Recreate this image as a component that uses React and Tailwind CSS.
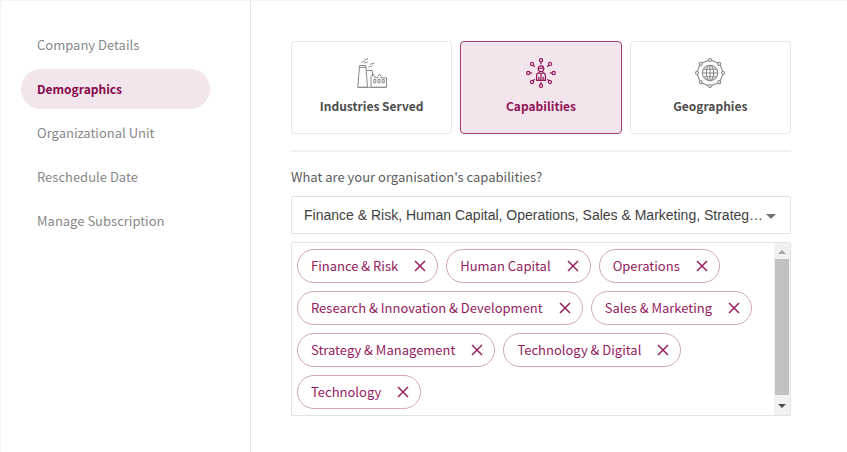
import { useState } from "react";

const navItems = [
  "Company Details",
  "Demographics",
  "Organizational Unit",
  "Reschedule Date",
  "Manage Subscription",
];

const selection =
  "Finance & Risk, Human Capital, Operations, Sales & Marketing, Strategy & Management, Technology & Digital";

const initialChips = [
  "Finance & Risk",
  "Human Capital",
  "Operations",
  "Research & Innovation & Development",
  "Sales & Marketing",
  "Strategy & Management",
  "Technology & Digital",
  "Technology",
];

const angles = [0, 45, 90, 135, 180, 225, 270, 315];

function FactoryIcon() {
  return (
    <svg viewBox="0 0 30 30" className="size-[30px]" fill="none" stroke="currentColor" strokeWidth="1" aria-hidden="true">
      <path d="M0.8 29.3 2.6 7.5h6.2l1.7 21.8zM2.4 9.3h6.7" />
      <path d="M9.3 12.5h5.9l.6 6" />
      <path d="M14 29.3V18.5l2.2-2.5 1.6 2.5v1.3h3v-1.3l1.8-2.5 1.6 2.5v1.3h5.3v9.5z" />
      <path d="M0.8 29.3h28.7" />
      <path d="M16.8 21.5h2v3.4h-2zM21 21.5h2v3.4h-2zM25.2 21.5h2v3.4h-2z" />
      <path d="M4.2 4.6c1.6-2.2 2.6.5 4.2-1.9M7.3 2.3C8.5.2 9.5 2.2 11 .5M7.3 5.3c1.4-1.8 2.4.4 4-1.8M11.3 9.4c1.6-2.2 2.6.4 4.2-1.9M13 6.6c1.4-1.8 2.6.2 4.6-1.8" />
    </svg>
  );
}

function CapabilitiesIcon() {
  return (
    <svg viewBox="0 0 30 30" className="size-[30px]" fill="none" stroke="currentColor" strokeWidth="1.2" aria-hidden="true">
      {angles.map((a) => (
        <g key={a} transform={`rotate(${a} 15 15)`}>
          <circle cx="15" cy="2.3" r="1.6" />
          <path d="M15 3.9v2.4" />
        </g>
      ))}
      <circle cx="15" cy="10.7" r="2.8" />
      <path d="M12.2 10c2 .5 4.2.3 5.6-.2" />
      <path d="M10.6 22.3v-4.8c0-1.6 1.2-2.5 2.8-2.9l1.6 1.6 1.6-1.6c1.6.4 2.8 1.3 2.8 2.9v4.8zM15 16.2v6M12.9 18.8v3.4M17.1 18.8v3.4" />
    </svg>
  );
}

function GlobeIcon() {
  return (
    <svg viewBox="0 0 30 30" className="size-[30px]" fill="none" stroke="currentColor" strokeWidth="1.1" aria-hidden="true">
      {angles.map((a) => (
        <g key={a} transform={`rotate(${a} 15 15)`}>
          <circle cx="15" cy="2" r="1.5" />
          <path d="M16.6 2.3 23 4.9" />
        </g>
      ))}
      <circle cx="15" cy="15" r="7.7" />
      <ellipse cx="15" cy="15" rx="3.7" ry="7.7" />
      <path d="M15 7.3v15.4M7.3 15h15.4M8.6 11.2h12.8M8.6 18.8h12.8" />
    </svg>
  );
}

const cards = [
  { label: "Industries Served", Icon: FactoryIcon },
  { label: "Capabilities", Icon: CapabilitiesIcon },
  { label: "Geographies", Icon: GlobeIcon },
];

function Chip({ label, onRemove }) {
  return (
    <li className="flex h-[34px] items-center rounded-full border border-[#d5a3bd] pl-[13px] pr-[11px] text-[#94215e]">
      {label}
      <button type="button" aria-label={`Remove ${label}`} onClick={onRemove} className="ml-4">
        <svg viewBox="0 0 12 12" className="size-3" stroke="currentColor" strokeWidth="1.5" aria-hidden="true">
          <path d="M1 1l10 10M11 1 1 11" />
        </svg>
      </button>
    </li>
  );
}

export default function App() {
  const [page, setPage] = useState("Demographics");
  const [tab, setTab] = useState("Capabilities");
  const [chips, setChips] = useState(initialChips);

  return (
    <div className="min-h-screen bg-[#f1f4f9] pl-px pt-px font-['Noto_Sans_CJK_SC',sans-serif] text-[13px] leading-5">
      <div className="flex min-h-[calc(100vh-1px)] rounded-tl bg-white">
        <nav className="w-[250px] shrink-0 border-r border-[#e4e4e4] py-6 pl-5 pr-10">
          <ul className="flex flex-col gap-1">
            {navItems.map((item) => (
              <li key={item}>
                <a
                  href="#"
                  aria-current={item === page ? "page" : undefined}
                  onClick={(e) => {
                    e.preventDefault();
                    setPage(item);
                  }}
                  className={`flex h-10 items-center rounded-full px-4 ${
                    item === page ? "bg-[#f2e5eb] text-xs font-bold text-[#86094b]" : "text-[#888888]"
                  }`}
                >
                  {item}
                </a>
              </li>
            ))}
          </ul>
        </nav>

        <main className="min-w-0 flex-1 pb-9 pl-10 pr-14 pt-10">
          <div className="grid grid-cols-3 gap-2 border-b-2 border-[#f0f0f0] pb-4">
            {cards.map(({ label, Icon }) => (
              <button
                key={label}
                type="button"
                aria-pressed={label === tab}
                onClick={() => setTab(label)}
                className={`flex h-[93px] flex-col items-center gap-2 rounded border pt-4 ${
                  label === tab
                    ? "border-[#a33c72] bg-[#f2e5eb] text-[#94165a]"
                    : "border-[#e6e6e6] bg-white text-[#8a8a8a]"
                }`}
              >
                <Icon />
                <span className={`text-xs font-bold leading-5 ${label === tab ? "" : "text-[#4d4d4d]"}`}>{label}</span>
              </button>
            ))}
          </div>

          <label htmlFor="capabilities" className="mt-[15px] block leading-5 text-[#5c5c5c]">
            What are your organisation's capabilities?
          </label>
          <div className="mt-[9px] flex h-[38px] items-center rounded-xs border border-[#e2e2e2] pl-3 pr-[14px]">
            <select
              id="capabilities"
              className="h-full min-w-0 flex-1 appearance-none truncate bg-transparent font-['Liberation_Sans',Arial,sans-serif] text-sm text-[#3f3f3f] outline-none"
            >
              <option>{selection}</option>
            </select>
            <svg viewBox="0 0 10 5" className="mt-0.5 h-[5px] w-[10px] shrink-0 fill-[#757575]" aria-hidden="true">
              <path d="M0 0h10L5 5z" />
            </svg>
          </div>

          <div className="mt-2 flex min-h-[174px] rounded-xs border border-[#e2e2e2]">
            <ul className="flex min-w-0 flex-1 flex-wrap content-start gap-2 px-[5px] py-1.5">
              {chips.map((label) => (
                <Chip key={label} label={label} onRemove={() => setChips(chips.filter((c) => c !== label))} />
              ))}
            </ul>
            <div className="flex w-4 shrink-0 flex-col items-center bg-[#f1f1f1]" aria-hidden="true">
              <svg viewBox="0 0 16 16" className="size-4 fill-[#a3a3a3]">
                <path d="M4 11h8L8 7z" />
              </svg>
              <div className="w-[14px] flex-1 bg-[#c1c1c1]" />
              <svg viewBox="0 0 16 20" className="h-5 w-4 fill-[#505050]">
                <path d="M4 9h8l-4 4z" />
              </svg>
            </div>
          </div>
        </main>
      </div>
    </div>
  );
}
